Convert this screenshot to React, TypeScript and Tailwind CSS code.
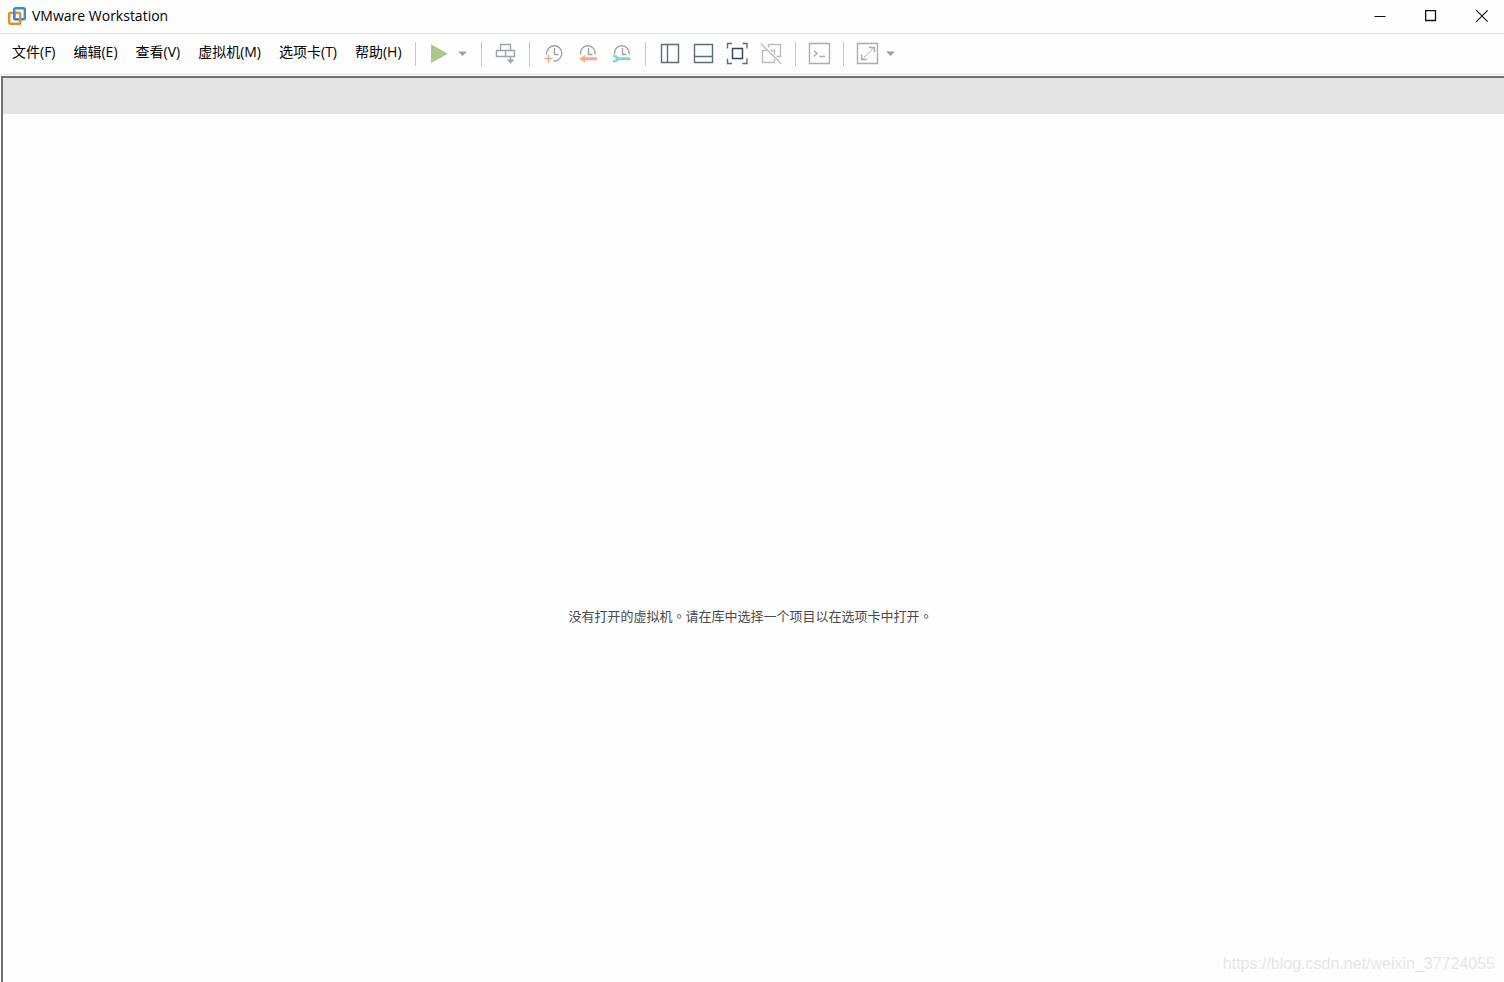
import type { ReactNode } from "react";

const menus = ["文件(F)", "编辑(E)", "查看(V)", "虚拟机(M)", "选项卡(T)", "帮助(H)"];

function Glyph({ color, children }: { color: string; children: ReactNode }) {
  return (
    <svg viewBox="0 0 24 24" className="h-6 w-6" fill="none" stroke={color} strokeWidth="1.4" aria-hidden="true">
      {children}
    </svg>
  );
}

function ToolButton({ label, color = "#9aa2a9", children }: { label: string; color?: string; children: ReactNode }) {
  return (
    <button type="button" aria-label={label} className="flex h-8 w-[34px] items-center justify-center hover:bg-[#eeeeee]">
      <Glyph color={color}>{children}</Glyph>
    </button>
  );
}

function CaretButton({ label }: { label: string }) {
  return (
    <button type="button" aria-label={label} className="flex h-8 w-[14px] items-center justify-center pb-[2px] hover:bg-[#eeeeee]">
      <svg viewBox="0 0 9 5" className="h-[5px] w-[9px]" fill="#9b9fa3" aria-hidden="true">
        <path d="M0 0.4H9L4.5 5Z" />
      </svg>
    </button>
  );
}

function Separator() {
  return <div className="mr-[6px] ml-[7px] h-6 w-px bg-[#c6c6c6]" />;
}

function Logo() {
  return (
    <svg viewBox="0 0 18 18" className="h-[18px] w-[18px]" fill="none" strokeWidth="2.4" aria-hidden="true">
      <rect x="6.2" y="1.2" width="10.6" height="11" rx="1.4" stroke="#3a8cc6" />
      <rect x="1.2" y="5.8" width="11" height="11" rx="1.4" stroke="#e98b2c" />
      <path d="M6.2 4.5V10.8Q6.2 12.2 7.6 12.2H9.6" stroke="#3a8cc6" />
    </svg>
  );
}

function TitleBar() {
  return (
    <header className="flex h-[34px] shrink-0 items-center border-b border-[#e2e2e2] pb-[2px] pl-2">
      <Logo />
      <h1 className="ml-[6px] grow text-[14px] leading-5 text-black">VMware Workstation</h1>
      <div className="flex gap-[7px]">
        <button type="button" aria-label="最小化" className="flex h-[30px] w-11 items-center justify-center hover:bg-[#e5e5e5]">
          <svg viewBox="0 0 12 12" className="h-3 w-3" stroke="#111" aria-hidden="true">
            <path d="M0.5 6.5H11.5" />
          </svg>
        </button>
        <button type="button" aria-label="最大化" className="flex h-[30px] w-11 items-center justify-center hover:bg-[#e5e5e5]">
          <svg viewBox="0 0 12 12" className="h-3 w-3" fill="none" stroke="#111" strokeWidth="1.3" aria-hidden="true">
            <path d="M0.6 0.6H10.5V10.5H0.6Z" />
          </svg>
        </button>
        <button type="button" aria-label="关闭" className="flex h-[30px] w-11 items-center justify-center hover:bg-[#e5e5e5]">
          <svg viewBox="0 0 12 12" className="h-3 w-3" stroke="#111" strokeWidth="1.1" aria-hidden="true">
            <path d="M0.3 0.3L11.7 11.7M11.7 0.3L0.3 11.7" />
          </svg>
        </button>
      </div>
    </header>
  );
}

function Toolbar() {
  return (
    <div className="flex h-10 shrink-0 items-center">
      <nav className="-mr-[3px] flex pl-[3px]">
        {menus.map((m) => (
          <button key={m} type="button" className="px-[9px] pb-[5px] text-[14px] leading-5 whitespace-nowrap text-black hover:bg-[#e5e5e5]">
            {m}
          </button>
        ))}
      </nav>
      <Separator />
      <ToolButton label="开启虚拟机">
        <path d="M4 2.3L21 11.7L4 21Z" fill="#a9c88a" stroke="none" />
      </ToolButton>
      <CaretButton label="电源选项" />
      <div className="w-1" />
      <Separator />
      <ToolButton label="发送 Ctrl+Alt+Del" color="#9ba5ad">
        <path d="M7.5 8.5V2.5H17.5V8.5M3.5 8.5H21.5V14.5H3.5ZM12.5 8.5V14.5M17.5 14.5V20" />
        <path d="M13.8 17.4H21.4L17.6 21.8Z" fill="#9ba5ad" stroke="none" />
      </ToolButton>
      <Separator />
      <ToolButton label="拍摄快照">
        <path d="M5.7 12.4A7.6 7.6 0 1 1 12.2 18.9M13.5 6V12.5H17.5" />
        <path d="M3.5 16.5H11.5M7.5 12.8V21" stroke="#f3a580" />
      </ToolButton>
      <ToolButton label="恢复快照">
        <path d="M5.5 12.4A7.4 7.4 0 1 1 20.1 12.4M13.5 6V12.5H17.5" />
        <path d="M4 16.8L10 13V15.3H22V18.3H10V20.6Z" fill="#f3ab8a" stroke="none" />
      </ToolButton>
      <ToolButton label="管理快照">
        <path d="M5.5 12.4A7.4 7.4 0 1 1 20.1 12.4M13.5 6V12.5H17.5" />
        <path d="M3.8 13.6Q7.4 12 9.6 15.3H20.4Q21.6 15.3 21.6 16.8T20.4 18.3H9.6Q7.4 21.6 3.8 20V18.3H6.4V15.3H3.8Z" fill="#86d0e2" stroke="none" />
      </ToolButton>
      <Separator />
      <ToolButton label="显示库" color="#5f6d79">
        <path d="M4.5 2.5H21.5V20.5H4.5ZM10.5 2.5V20.5" />
      </ToolButton>
      <ToolButton label="显示缩略图栏" color="#5f6d79">
        <path d="M3.5 2.5H21.5V20.5H3.5ZM3.5 14.5H21.5" />
      </ToolButton>
      <ToolButton label="全屏" color="#5f6d79">
        <path d="M2.5 6.5V1.5H7M17.5 1.5H22V6.5M22 16.5V21.5H17.5M7 21.5H2.5V16.5" />
        <path d="M7.5 6.5H17.5V16.5H7.5Z" stroke="#34465a" />
      </ToolButton>
      <ToolButton label="Unity 模式" color="#b9bec3">
        <path d="M9.5 5.5V2.5H21.5V14.5H17.5M7.5 8.5H3.5V20.5H15.5V17M11.5 8.5H15.5V12.5" />
        <path d="M1.7 1.5L22.2 21.8" />
      </ToolButton>
      <Separator />
      <ToolButton label="控制台视图" color="#a7adb2">
        <path d="M2.5 1.5H22.5V21.5H2.5Z" />
        <path d="M6.8 8.6L10 11.5L6.8 14.4M12.5 14.5H18" />
      </ToolButton>
      <Separator />
      <ToolButton label="自由拉伸" color="#a7adb2">
        <path d="M2.5 1.5H22.5V21.5H2.5Z" />
        <path d="M14 5.5H19.5V10.5M6.5 12.5V17.5H12" />
        <path d="M7 17L19 6" strokeDasharray="1.6 0.9" strokeWidth="1.1" />
      </ToolButton>
      <CaretButton label="拉伸选项" />
    </div>
  );
}

function Stop() {
  return <span className="font-['Noto_Sans_CJK_TC',sans-serif]">。</span>;
}

export default function App() {
  return (
    <div className="relative flex min-h-screen flex-col bg-[#fefefe] font-['Open_Sans','Noto_Sans_CJK_SC',sans-serif]">
      <TitleBar />
      <Toolbar />
      <div className="h-[2px] shrink-0 border-t border-[#e2e2e2]" />
      <main className="ml-px flex grow flex-col border-t-2 border-l-2 border-[#6f7171]">
        <div className="h-9 shrink-0 bg-[#e3e3e5]" />
        <div className="flex grow items-center justify-center pt-[136px] pr-[6px]">
          <p className="text-[13px] leading-5 text-[#4a4a4a]">
            没有打开的虚拟机<Stop />请在库中选择一个项目以在选项卡中打开<Stop />
          </p>
        </div>
      </main>
      <div className="absolute right-[9px] bottom-[6px] font-['Liberation_Sans',sans-serif] text-[16px] leading-6 text-[#e6e6e6]">
        https://blog.csdn.net/weixin_37724055
      </div>
    </div>
  );
}
